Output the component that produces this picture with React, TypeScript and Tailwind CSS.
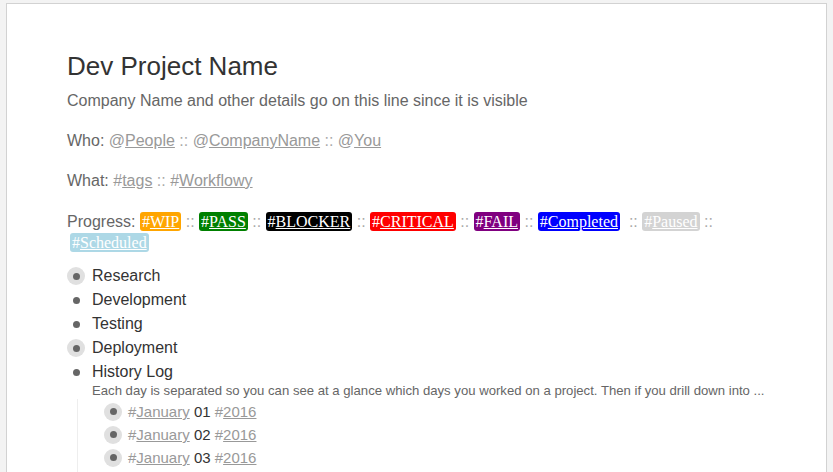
import React from 'react';

const sans = { fontFamily: '"Liberation Sans", Arial, sans-serif' };

function Tag({ name, className }: { name: string; className: string }) {
  return (
    <span
      className={`rounded-[3px] px-[2px] py-[1px] text-[16px] text-white ${className}`}
      style={{ fontFamily: '"Liberation Serif", "Times New Roman", serif' }}
    >
      #<span className="underline">{name}</span>
    </span>
  );
}

const Sep = () => <span className="text-[#aaa]"> :: </span>;

function Link({ sym, name }: { sym: string; name: string }) {
  return (
    <span className="text-[#999]">
      {sym}
      <span className="underline">{name}</span>
    </span>
  );
}

function Bullet({ collapsed }: { collapsed?: boolean }) {
  return (
    <span
      className={`flex h-[18px] w-[18px] shrink-0 items-center justify-center rounded-full ${
        collapsed ? 'bg-[#e0e0e0]' : ''
      }`}
    >
      <span className="h-[7px] w-[7px] rounded-full bg-[#666]" />
    </span>
  );
}

function Item({ label, collapsed }: { label: string; collapsed?: boolean }) {
  return (
    <div className="flex h-[24px] items-center gap-[7px]">
      <Bullet collapsed={collapsed} />
      <span className="text-[16px] leading-[24px] text-[#333]">{label}</span>
    </div>
  );
}

function Day({ n }: { n: string }) {
  return (
    <div className="flex h-[23px] items-center gap-[6px]">
      <Bullet collapsed />
      <span className="text-[15px] leading-[23px] text-[#333]">
        <Link sym="#" name="January" /> {n} <Link sym="#" name="2016" />
      </span>
    </div>
  );
}

export default function App() {
  return (
    <div className="min-h-[472px] bg-[#f3f3f3] pt-[3px]" style={sans}>
      <div className="ml-[6px] h-[469px] w-[821px] overflow-hidden border border-b-0 border-[#d2d2d2] bg-white pl-[60px] pr-[60px] pt-[46px]">
        <h1 className="text-[26px] leading-[32px] text-[#333]">Dev Project Name</h1>
        <p className="mt-[9px] text-[16px] leading-[20px] text-[#666]">
          Company Name and other details go on this line since it is visible
        </p>
        <p className="mt-[20px] text-[16px] leading-[20px] text-[#666]">
          Who: <Link sym="@" name="People" />
          <Sep />
          <Link sym="@" name="CompanyName" />
          <Sep />
          <Link sym="@" name="You" />
        </p>
        <p className="mt-[20px] text-[16px] leading-[20px] text-[#666]">
          What: <Link sym="#" name="tags" />
          <Sep />
          <Link sym="#" name="Workflowy" />
        </p>
        <p className="mt-[20px] text-[16px] leading-[21px] text-[#666]">
          Progress: <Tag name="WIP" className="bg-[#ffa500]" />
          <Sep />
          <Tag name="PASS" className="bg-[#008000]" />
          <Sep />
          <Tag name="BLOCKER" className="bg-black" />
          <Sep />
          <Tag name="CRITICAL" className="bg-[#ff0000]" />
          <Sep />
          <Tag name="FAIL" className="bg-[#800080]" />
          <Sep />
          <Tag name="Completed" className="bg-[#0000ff]" />
          <span className="text-[#aaa]">&nbsp; :: </span>
          <Tag name="Paused" className="bg-[#d3d3d3]" />
          <Sep />
          <Tag name="Scheduled" className="ml-[3px] bg-[#add8e6]" />
        </p>
        <div className="mt-[11px]">
          <Item label="Research" collapsed />
          <Item label="Development" />
          <Item label="Testing" />
          <Item label="Deployment" collapsed />
          <Item label="History Log" />
          <p className="pl-[25px] text-[13.15px] leading-[14px] text-[#666]">
            Each day is separated so you can see at a glance which days you worked on a project. Then if you drill down into ...
          </p>
          <div className="ml-[10px] mt-[1px] border-l border-[#eee] pl-[26px] pt-[1px] pb-[20px]">
            <Day n="01" />
            <Day n="02" />
            <Day n="03" />
          </div>
        </div>
      </div>
    </div>
  );
}
